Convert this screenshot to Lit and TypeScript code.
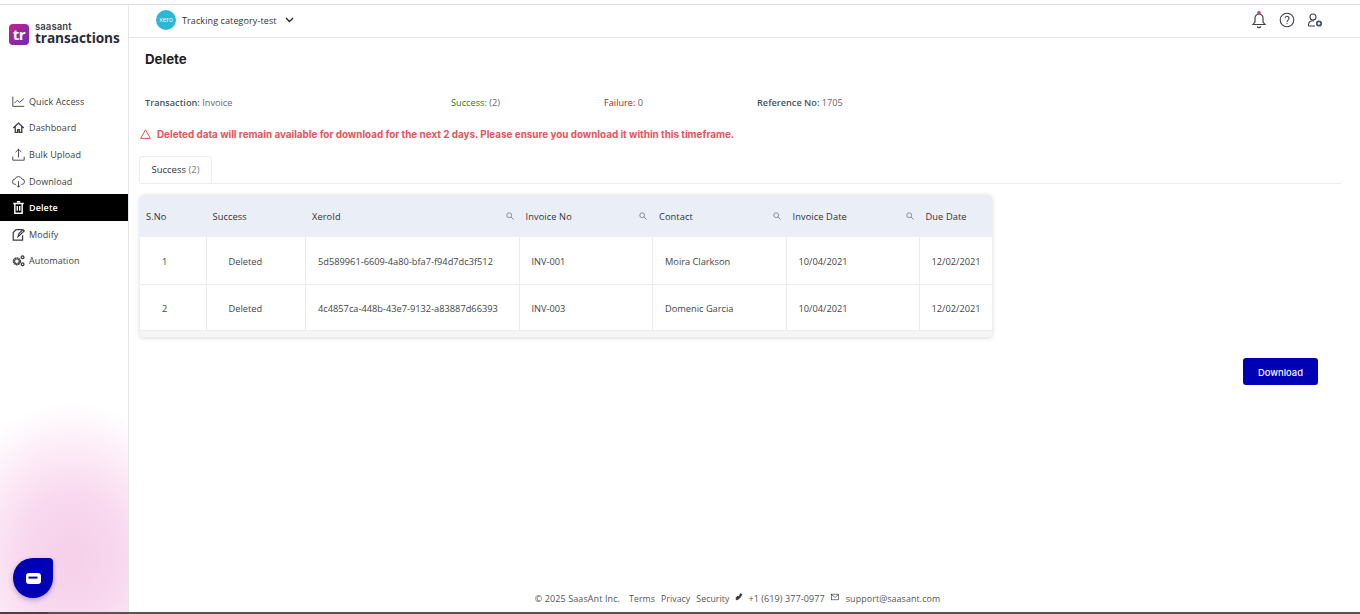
import { css, html, LitElement, svg } from "lit";
import { customElement } from "lit/decorators.js";

const navIcons: Record<string, unknown> = {
  chart: svg`<path d="M1 2v12h14M3 10l3.5-3.5 3 2.5 5-4.5" />`,
  home: svg`<path d="M1.5 8.5L8 2.5l6.5 6M4 7v7h3v-3.5h2V14h3V7" stroke-width="1.6" />`,
  upload: svg`<path d="M8 11.5V1.5M4.3 5.2L8 1.5l3.7 3.7M1 10.5V15h14v-4.5" />`,
  cloud: svg`<path d="M5 11.5H4a3.2 3.2 0 0 1-.4-6.4A4.6 4.6 0 0 1 12.3 5 3.2 3.2 0 0 1 12 11.5h-1M8 7.5v7.5M6 13l2 2 2-2" />`,
  trash: svg`<path d="M1.5 3h13M3.5 3v12h9V3M6 1h4M6.5 6v6M9.5 6v6" stroke-width="1.8" />`,
  modify: svg`<path d="M12.5 2H5L1.5 5.5V15H13V9M7.5 10.5l1-3.5 5-5 1.5 1.5-5 5z" stroke-width="1.5" />`,
};

const navItems = [
  { label: "Quick Access", icon: "chart" },
  { label: "Dashboard", icon: "home" },
  { label: "Bulk Upload", icon: "upload" },
  { label: "Download", icon: "cloud" },
  { label: "Delete", icon: "trash", active: true },
  { label: "Modify", icon: "modify" },
  { label: "Automation", icon: "gears" },
];

const columns = [
  { label: "S.No" },
  { label: "Success" },
  { label: "XeroId", search: true },
  { label: "Invoice No", search: true },
  { label: "Contact", search: true },
  { label: "Invoice Date", search: true },
  { label: "Due Date" },
];

const rows = [
  ["1", "Deleted", "5d589961-6609-4a80-bfa7-f94d7dc3f512", "INV-001", "Moira Clarkson", "10/04/2021", "12/02/2021"],
  ["2", "Deleted", "4c4857ca-448b-43e7-9132-a83887d66393", "INV-003", "Domenic Garcia", "10/04/2021", "12/02/2021"],
];

@customElement("app-root")
export class AppRoot extends LitElement {
  static override styles = css`
    :host {
      display: flex;
      flex-direction: column;
      height: 614px;
      overflow: hidden;
      background: #fff;
      font-family: "Open Sans", "Liberation Sans", sans-serif;
      color: #333;
    }
    .top-strip {
      height: 4px;
      flex: none;
      background: #fff;
      border-bottom: 1px solid #dcdcdc;
    }
    .shell {
      flex: 1;
      display: flex;
      min-height: 0;
      position: relative;
    }
    .bottom-bar {
      flex: none;
      height: 2px;
      background: linear-gradient(90deg, #4a4044 0 48px, #555 48px 100%);
    }

    /* sidebar */
    .sidebar {
      width: 128px;
      flex: none;
      border-right: 1px solid #e6e6ea;
      background:
        radial-gradient(ellipse 130px 155px at 72px 552px, #f6cfe9 0%, #f8d9ef 40%, #fce9f6 66%, #fef5fb 84%, rgba(255, 255, 255, 0) 100%),
        #fff;
    }
    .logo {
      display: flex;
      align-items: center;
      gap: 6px;
      height: 46px;
      padding: 0 0 0 9px;
      box-sizing: border-box;
      margin-top: 6px;
    }
    .logo-mark {
      width: 20px;
      height: 21px;
      border-radius: 4px;
      background: linear-gradient(135deg, #c2238d 0%, #6d2bb5 100%);
      color: #fff;
      font: 700 15px/20px "Open Sans", sans-serif;
      text-align: center;
      letter-spacing: -0.5px;
    }
    .logo-text {
      display: flex;
      flex-direction: column;
      color: #2c2c38;
    }
    .logo-small {
      font: 600 9.5px/8px "Inter", sans-serif;
      letter-spacing: 0.1px;
      color: #44444e;
    }
    .logo-big {
      font: 700 13.7px/14px "Open Sans", sans-serif;
      letter-spacing: -0.1px;
    }
    nav {
      margin-top: 31px;
      display: flex;
      flex-direction: column;
    }
    .nav-item {
      height: 26.6px;
      display: flex;
      align-items: center;
      gap: 4px;
      padding-left: 12px;
      font-size: 9px;
      letter-spacing: 0.1px;
      color: #3c3c3c;
    }
    .nav-item.active {
      background: #000;
      color: #fff;
      font-weight: 600;
    }
    .nav-item svg {
      width: 13px;
      height: 13px;
      flex: none;
      fill: none;
      stroke: currentColor;
      stroke-width: 1.1;
    }
    .chat {
      position: absolute;
      left: 13px;
      bottom: 14px;
      width: 40px;
      height: 40px;
      border-radius: 50% 4px 50% 50%;
      background: #0000b4;
      box-shadow: 0 2px 5px rgba(60, 40, 160, 0.35);
      display: flex;
      align-items: center;
      justify-content: center;
    }
    .chat svg {
      width: 15px;
      height: 11px;
    }

    /* main column */
    .main {
      flex: 1;
      min-width: 0;
      display: flex;
      flex-direction: column;
    }
    header {
      height: 33px;
      flex: none;
      box-sizing: border-box;
      border-bottom: 1px solid #e6e6e6;
      display: flex;
      align-items: center;
      padding: 0 37px 2px 27px;
    }
    .xero {
      width: 20px;
      height: 20px;
      border-radius: 50%;
      background: #2bb7d6;
      color: #eafaff;
      font: 7px/20px "Liberation Sans", sans-serif;
      text-align: center;
    }
    .org {
      margin-left: 6px;
      font-size: 9px;
      letter-spacing: 0.1px;
      color: #333;
    }
    .chevron {
      margin-left: 8px;
      width: 9px;
      height: 6px;
      fill: none;
      stroke: #222;
      stroke-width: 1.3;
    }
    .header-icons {
      margin-left: auto;
      display: flex;
      align-items: center;
      gap: 12px;
    }
    .header-icons svg {
      width: 16px;
      height: 18px;
      fill: none;
      stroke: #3f3f46;
      stroke-width: 1.1;
      overflow: visible;
    }
    .content {
      flex: 1;
      padding: 12px 19px 0 11px;
      min-height: 0;
    }
    h1 {
      margin: 0 0 0 5px;
      font: 700 13.3px/18px "Inter", "Liberation Sans", sans-serif;
      color: #1e1e1e;
    }
    .summary {
      display: grid;
      grid-template-columns: 306px 153px 153px auto;
      justify-content: start;
      margin: 29px 0 0 5px;
      font-size: 9.2px;
      line-height: 12px;
      color: #666;
    }
    .summary b {
      font-weight: 600;
      color: #3f5563;
    }
    .summary .ok {
      color: #1a7a1a;
      font-weight: 400;
    }
    .summary .bad {
      color: #c0201c;
      font-weight: 400;
    }
    .warning {
      display: flex;
      align-items: center;
      gap: 6px;
      margin-top: 18px;
      font: 700 9.87px/14px "Inter", "Liberation Sans", sans-serif;
      color: #e5545a;
    }
    .warning svg {
      width: 11px;
      height: 10px;
      fill: none;
      stroke: #e5545a;
      stroke-width: 1;
    }
    .tabs {
      margin-top: 15px;
      height: 27px;
      border-bottom: 1px solid #ececec;
      display: flex;
    }
    .tab {
      width: 73px;
      height: 27px;
      margin-left: -1px;
      box-sizing: border-box;
      border: 1px solid #ececec;
      border-bottom: 1px solid #fff;
      border-radius: 4px 4px 0 0;
      font-size: 9.5px;
      line-height: 25px;
      text-align: center;
      color: #333;
    }
    .tab span {
      color: #777;
    }

    /* table */
    .table {
      margin-top: 11px;
      width: 852px;
      height: 142px;
      display: grid;
      grid-template-columns: 66.5px 99.5px 213.5px 133.5px 133.5px 133px 73px;
      grid-template-rows: 42px 48px 46px 6px;
      border-radius: 4px;
      box-shadow: 0 1px 5px rgba(0, 0, 0, 0.16);
      overflow: hidden;
      font-size: 9.25px;
    }
    .th {
      background: #eaeef7;
      display: flex;
      align-items: center;
      justify-content: space-between;
      padding: 0 6px 0 6px;
      color: #333;
      font-weight: 500;
      letter-spacing: 0.1px;
    }
    .th svg {
      width: 8px;
      height: 8px;
      fill: none;
      stroke: #8a8a92;
      stroke-width: 1.2;
    }
    .td {
      display: flex;
      align-items: center;
      padding: 1px 0 0 12px;
      color: #444;
      border-right: 1px solid #ececec;
      border-bottom: 1px solid #ececec;
      box-sizing: border-box;
    }
    .td.first,
    .td.status {
      padding-left: 22px;
    }
    .table-foot {
      grid-column: 1 / -1;
      background: #f6f6f7;
    }
    .actions {
      display: flex;
      justify-content: flex-end;
      margin: 21px 23px 0 0;
    }
    .download {
      width: 75px;
      height: 27px;
      border: 0;
      padding: 1px 0 0;
      border-radius: 3px;
      background: #0000b4;
      color: #fff;
      font: 500 9.4px "Inter", "Liberation Sans", sans-serif;
    }
    footer {
      flex: none;
      height: 30px;
      display: flex;
      align-items: center;
      justify-content: center;
      padding: 3px 14px 0 0;
      box-sizing: border-box;
      font-size: 9px;
      letter-spacing: 0.1px;
      color: #555;
      white-space: nowrap;
    }
    footer .links {
      display: flex;
      gap: 6px;
      margin-left: 9px;
      font-size: 8.7px;
    }
    footer svg {
      width: 8px;
      height: 8px;
      fill: none;
      stroke: #333;
      margin: -3px 5px 0 6px;
    }
    footer .email {
      font-size: 8.9px;
      margin-left: 2px;
    }
  `;

  private _navIcon(name: string) {
    if (name === "gears") {
      return html`<svg viewBox="0 0 16 16">
        <circle cx="6" cy="9" r="3.6" stroke-width="3" stroke-dasharray="1.8 .5" />
        <circle cx="13" cy="4" r="1.7" stroke-width="1.6" />
        <circle cx="13" cy="12.5" r="1.7" stroke-width="1.6" />
      </svg>`;
    }
    return html`<svg viewBox="0 0 16 16">${navIcons[name]}</svg>`;
  }

  private _searchIcon() {
    return html`<svg viewBox="0 0 10 10"><circle cx="4" cy="4" r="3" /><path d="M6.2 6.2L9.5 9.5" /></svg>`;
  }

  override render() {
    return html`
      <div class="top-strip"></div>
      <div class="shell">
        <aside class="sidebar">
          <div class="logo">
            <div class="logo-mark">tr</div>
            <div class="logo-text">
              <span class="logo-small">saasant</span>
              <span class="logo-big">transactions</span>
            </div>
          </div>
          <nav>
            ${navItems.map(
              (item) => html`<div class="nav-item ${item.active ? "active" : ""}">
                ${this._navIcon(item.icon)}<span>${item.label}</span>
              </div>`
            )}
          </nav>
        </aside>
        <div class="chat">
          <svg viewBox="0 0 15 11">
            <path d="M3 0h9a3 3 0 0 1 3 3v5a3 3 0 0 1-3 3H3a3 3 0 0 1-3-3V3a3 3 0 0 1 3-3z" fill="#fff" />
            <rect x="2.5" y="3.6" width="9" height="2" fill="#0000b4" />
          </svg>
        </div>
        <div class="main">
          <header>
            <div class="xero">xero</div>
            <span class="org">Tracking category-test</span>
            <svg class="chevron" viewBox="0 0 9 6"><path d="M1 1l3.5 3.5L8 1" /></svg>
            <div class="header-icons">
              <svg viewBox="0 0 16 18">
                <path d="M8 3a4 4 0 0 0-4 4v4l-2 2.5h12L12 11V7a4 4 0 0 0-4-4zM6.3 15.5a1.8 1.8 0 0 0 3.4 0" stroke-width="1.2" />
                <circle cx="8" cy="1.8" r="1.8" fill="#c8386b" stroke="none" />
              </svg>
              <svg viewBox="0 0 16 18">
                <circle cx="8" cy="9" r="6.8" />
                <path d="M6 7.3a2 2 0 1 1 3.2 1.6C8.4 9.5 8 10 8 11" />
                <circle cx="8" cy="12.6" r=".6" fill="#3f3f46" stroke="none" />
              </svg>
              <svg viewBox="0 0 16 18">
                <circle cx="6" cy="6" r="3" />
                <path d="M1.5 15v-1.5A4 4 0 0 1 7 10M1.5 15H8" />
                <circle cx="12" cy="12.5" r="2.2" stroke="#41566a" stroke-width="1.8" />
              </svg>
            </div>
          </header>
          <div class="content">
            <h1>Delete</h1>
            <div class="summary">
              <div><b>Transaction:</b> Invoice</div>
              <div><span class="ok">Success:</span> (2)</div>
              <div><span class="bad">Failure:</span> 0</div>
              <div><b>Reference No:</b> 1705</div>
            </div>
            <div class="warning">
              <svg viewBox="0 0 11 10"><path d="M5.5.8L10.4 9.4H.6z" /></svg>
              <span>Deleted data will remain available for download for the next 2 days. Please ensure you download it within this timeframe.</span>
            </div>
            <div class="tabs">
              <div class="tab">Success <span>(2)</span></div>
            </div>
            <div class="table">
              ${columns.map(
                (col) => html`<div class="th">
                  <span>${col.label}</span>${col.search ? this._searchIcon() : ""}
                </div>`
              )}
              ${rows.map((row) =>
                row.map(
                  (cell, i) => html`<div class="td ${i === 0 ? "first" : ""} ${i === 1 ? "status" : ""}">${cell}</div>`
                )
              )}
              <div class="table-foot"></div>
            </div>
            <div class="actions">
              <button class="download">Download</button>
            </div>
          </div>
          <footer>
            <span>© 2025 SaasAnt Inc.</span>
            <span class="links"><span>Terms</span><span>Privacy</span><span>Security</span></span>
            <svg viewBox="0 0 10 10"><path d="M1.5 8.5c3 0 6-3.5 7-7L6.5 1 6 3 4.5 4.5 3 4 1.5 6z" fill="#333" /></svg>
            <span>+1 (619) 377-0977</span>
            <svg viewBox="0 0 10 10"><rect x=".5" y="1.5" width="9" height="7" stroke-width=".8" /><path d="M.5 2l4.5 3.5L9.5 2" stroke-width=".8" /></svg>
            <span class="email">support@saasant.com</span>
          </footer>
        </div>
      </div>
      <div class="bottom-bar"></div>
    `;
  }
}
